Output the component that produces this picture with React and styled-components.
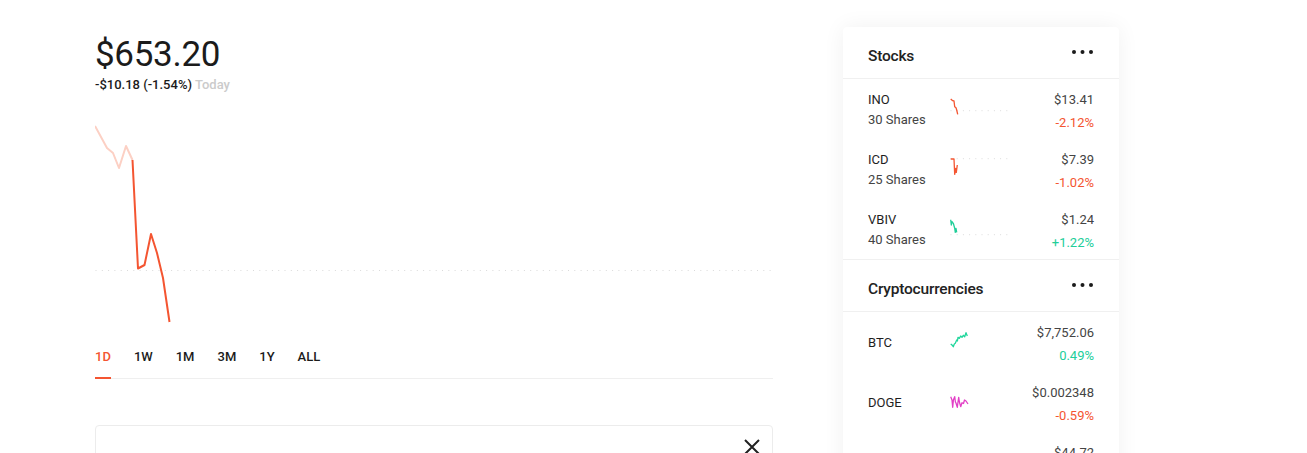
import React from "react";
import styled, { createGlobalStyle } from "styled-components";

const RED = "#f45531";
const GREEN = "#21ce99";

const GlobalStyle = createGlobalStyle`
  html, body { margin: 0; padding: 0; background: #fff; }
  body { font-family: Roboto, "Noto Sans", Arial, sans-serif; color: #1b1b1b; }
  * { box-sizing: border-box; }
`;

const Page = styled.div`
  display: flex;
  align-items: flex-start;
  gap: 70px;
  padding-left: 95px;
`;

const Main = styled.main`
  width: 678px;
  padding-top: 37px;
  display: flex;
  flex-direction: column;
`;

const Price = styled.h1`
  margin: 0;
  font-size: 35px;
  line-height: 35px;
  font-weight: 400;
  color: #1b1b1b;
  letter-spacing: -0.3px;
`;

const Change = styled.div`
  margin-top: 5px;
  font-size: 13px;
  line-height: 16px;
  font-weight: 500;
  color: #1b1b1b;
`;

const Muted = styled.span`
  color: #cbcbcb;
`;

const ChartBox = styled.div`
  margin-top: 27px;
  height: 210px;
  svg { display: block; }
`;

const Tabs = styled.nav`
  margin-top: 17px;
  display: flex;
  gap: 23px;
  border-bottom: 1px solid #efefef;
`;

const Tab = styled.button`
  all: unset;
  cursor: pointer;
  font-family: Roboto, sans-serif;
  font-size: 13px;
  font-weight: 500;
  line-height: 20px;
  padding-bottom: 10px;
  margin-bottom: -1px;
  color: ${(p) => (p.$active ? RED : "#1b1b1b")};
  border-bottom: 2px solid ${(p) => (p.$active ? RED : "transparent")};
`;

const Panel = styled.section`
  margin-top: 46px;
  height: 160px;
  border: 1px solid #ececec;
  border-radius: 4px;
  display: flex;
  justify-content: flex-end;
  align-items: flex-start;
  padding: 13px 12px;
`;

const CloseBtn = styled.button`
  all: unset;
  cursor: pointer;
  width: 16px;
  height: 16px;
  svg { display: block; }
`;

const Sidebar = styled.aside`
  width: 276px;
  margin-top: 27px;
  background: #fff;
  border-radius: 4px;
  box-shadow: 0 0 22px rgba(0, 0, 0, 0.06);
`;

const Section = styled.section`
  border-bottom: 1px solid #f0f0f0;
`;

const Header = styled.header`
  height: 52px;
  padding: 7px 25px 0;
  display: flex;
  align-items: center;
  justify-content: space-between;
  border-bottom: 1px solid #f0f0f0;
`;

const Title = styled.h2`
  margin: 0;
  font-size: 15.5px;
  line-height: 20px;
  font-weight: 500;
  color: #222;
  letter-spacing: -0.2px;
`;

const MoreBtn = styled.button`
  all: unset;
  cursor: pointer;
  margin-bottom: 8px;
  width: 22px;
  height: 4px;
  svg { display: block; }
`;

const Row = styled.div`
  height: 60px;
  padding: 0 25px;
  display: grid;
  grid-template-columns: 82px 60px 1fr;
`;

const NameCol = styled.div`
  padding-top: ${(p) => (p.$single ? "1px" : "11px")};
  align-self: ${(p) => (p.$single ? "center" : "start")};
  display: flex;
  flex-direction: column;
`;

const Symbol = styled.span`
  font-size: 13px;
  line-height: 20px;
  font-weight: 400;
  color: #1e1e1e;
`;

const Shares = styled.span`
  font-size: 13px;
  line-height: 20px;
  color: #444;
`;

const Spark = styled.div`
  margin-top: 16px;
  svg { display: block; }
`;

const ValueCol = styled.div`
  padding-top: 11px;
  display: flex;
  flex-direction: column;
  align-items: flex-end;
`;

const Value = styled.span`
  font-size: 13px;
  line-height: 20px;
  color: #444;
`;

const Pct = styled.span`
  margin-top: 3px;
  font-size: 13px;
  line-height: 20px;
  color: ${(p) => (p.$up ? GREEN : RED)};
`;

const Dots = () => (
  <svg width="22" height="4" viewBox="0 0 22 4">
    <circle cx="2" cy="2" r="2" fill="#1b1b1b" />
    <circle cx="10.5" cy="2" r="2" fill="#1b1b1b" />
    <circle cx="19" cy="2" r="2" fill="#1b1b1b" />
  </svg>
);

const pts = (arr) => arr.map((p) => p.join(",")).join(" ");

const Sparkline = ({ line, color, base }) => (
  <svg width="60" height="24" viewBox="0 0 60 24">
    {base != null && (
      <line
        x1="0.5"
        y1={base}
        x2="58"
        y2={base}
        stroke="#dcdcdc"
        strokeWidth="1"
        strokeDasharray="1 5.2"
      />
    )}
    <polyline
      points={pts(line)}
      fill="none"
      stroke={color}
      strokeWidth="1.3"
      strokeLinejoin="round"
    />
  </svg>
);

const stocks = [
  {
    sym: "INO",
    shares: "30 Shares",
    price: "$13.41",
    pct: "-2.12%",
    up: false,
    base: 15.7,
    line: [[0.7, 4], [2.7, 5.7], [4, 6], [4.7, 11.7], [6, 12.7], [6.7, 15], [7.7, 19.3]],
  },
  {
    sym: "ICD",
    shares: "25 Shares",
    price: "$7.39",
    pct: "-1.02%",
    up: false,
    base: 3.7,
    line: [[0.7, 4], [4, 4], [4.7, 19.3], [5.7, 13.3], [6.3, 17.3], [7.3, 10]],
  },
  {
    sym: "VBIV",
    shares: "40 Shares",
    price: "$1.24",
    pct: "+1.22%",
    up: true,
    base: 19.7,
    line: [[0.7, 4.7], [1.3, 10], [2, 6.7], [3.3, 8.3], [4.7, 13.3], [5.3, 17.3], [6, 13.3], [6.7, 17.3]],
  },
];

const cryptos = [
  {
    sym: "BTC",
    price: "$7,752.06",
    pct: "0.49%",
    up: true,
    color: "#1fd69b",
    line: [[0.7, 16], [2, 17], [3.3, 18.7], [4.3, 16], [5.3, 15.3], [6.7, 12], [7.4, 13], [8, 9.3], [9.3, 10.3], [10.7, 8], [12, 9.3], [13.3, 7.3], [14.7, 8.7], [16, 4.7], [17.3, 8]],
  },
  {
    sym: "DOGE",
    price: "$0.002348",
    pct: "-0.59%",
    up: false,
    color: "#e23fc6",
    line: [[0.7, 8.7], [2, 12], [2.7, 19.3], [3.4, 12], [4.7, 8.7], [5.4, 14], [6, 15], [7.3, 19.3], [8, 14], [8.7, 9.3], [9.4, 14], [10.7, 18.7], [12, 14.7], [13.5, 15.5], [14.5, 12], [16, 13], [18, 16]],
  },
  {
    sym: "LTC",
    price: "$44.72",
    pct: "0.12%",
    up: true,
    color: "#1fd69b",
    line: [[14, 8], [16, 8.5], [18, 8]],
  },
];

const light = [[0, 6], [12, 28], [18, 33], [24, 48], [31, 26], [37.5, 40]];
const dark = [[37.5, 40], [43, 148.5], [49.5, 145], [56, 114], [62, 133], [68, 158], [74.5, 202]];

export default function App() {
  const tabs = ["1D", "1W", "1M", "3M", "1Y", "ALL"];
  return (
    <>
      <GlobalStyle />
      <Page>
        <Main>
          <Price>$653.20</Price>
          <Change>
            -$10.18 (-1.54%) <Muted>Today</Muted>
          </Change>
          <ChartBox>
            <svg width="678" height="210" viewBox="0 0 678 210">
              <line
                x1="0.5"
                y1="150.5"
                x2="678"
                y2="150.5"
                stroke="#dadada"
                strokeWidth="1"
                strokeDasharray="1 5.3"
              />
              <polyline points={pts(light)} fill="none" stroke="#fcd0c4" strokeWidth="2" strokeLinejoin="round" />
              <polyline points={pts(dark)} fill="none" stroke={RED} strokeWidth="2" strokeLinejoin="round" />
            </svg>
          </ChartBox>
          <Tabs>
            {tabs.map((t, i) => (
              <Tab key={t} $active={i === 0}>
                {t}
              </Tab>
            ))}
          </Tabs>
          <Panel>
            <CloseBtn aria-label="Close">
              <svg width="16" height="16" viewBox="0 0 16 16">
                <path d="M1 1 L15 15 M15 1 L1 15" stroke="#222" strokeWidth="2" fill="none" />
              </svg>
            </CloseBtn>
          </Panel>
        </Main>
        <Sidebar>
          <Section>
            <Header>
              <Title>Stocks</Title>
              <MoreBtn aria-label="More">
                <Dots />
              </MoreBtn>
            </Header>
            {stocks.map((s) => (
              <Row key={s.sym}>
                <NameCol>
                  <Symbol>{s.sym}</Symbol>
                  <Shares>{s.shares}</Shares>
                </NameCol>
                <Spark>
                  <Sparkline line={s.line} color={s.up ? GREEN : RED} base={s.base} />
                </Spark>
                <ValueCol>
                  <Value>{s.price}</Value>
                  <Pct $up={s.up}>{s.pct}</Pct>
                </ValueCol>
              </Row>
            ))}
          </Section>
          <Section>
            <Header>
              <Title>Cryptocurrencies</Title>
              <MoreBtn aria-label="More">
                <Dots />
              </MoreBtn>
            </Header>
            {cryptos.map((c) => (
              <Row key={c.sym}>
                <NameCol $single>
                  <Symbol>{c.sym}</Symbol>
                </NameCol>
                <Spark>
                  <Sparkline line={c.line} color={c.color} />
                </Spark>
                <ValueCol>
                  <Value>{c.price}</Value>
                  <Pct $up={c.up}>{c.pct}</Pct>
                </ValueCol>
              </Row>
            ))}
          </Section>
        </Sidebar>
      </Page>
    </>
  );
}
